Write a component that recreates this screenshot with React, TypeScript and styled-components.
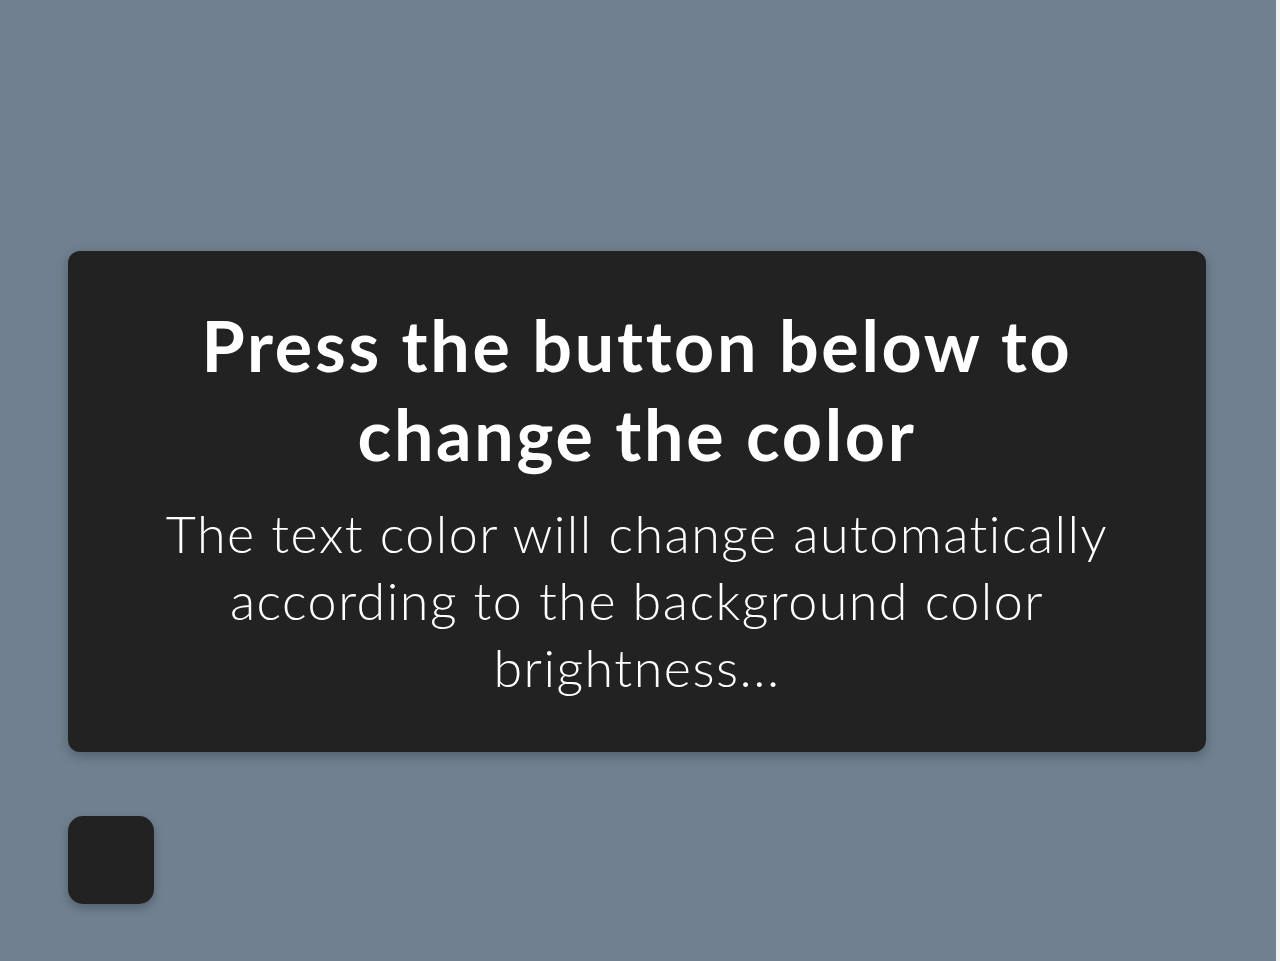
import styled, { createGlobalStyle } from 'styled-components'

const GlobalStyle = createGlobalStyle`
  html {
    background: #f1f1f1;
  }
  body {
    margin: 0;
    font-family: Lato, "Open Sans", sans-serif;
    font-variant-ligatures: none;
  }
`

const Page = styled.main`
  box-sizing: border-box;
  width: calc(100vw - 4px);
  min-height: 100vh;
  background: #708090;
  padding: 251px 70px 0 68px;
  display: flex;
  flex-direction: column;
  gap: 64px;
`

const Card = styled.section`
  box-sizing: border-box;
  height: 501px;
  background: #222222;
  border-radius: 12px;
  box-shadow: 0 4px 12px rgba(0, 0, 0, 0.25);
  padding: 50px 70px 0;
  text-align: center;
  color: #ffffff;
`

const Title = styled.h1`
  margin: 0 20px;
  font-size: 70px;
  font-weight: 700;
  line-height: 89px;
  letter-spacing: 2.7px;
`

const Description = styled.p`
  margin: 21px 0 0;
  font-size: 52px;
  font-weight: 300;
  line-height: 67px;
  letter-spacing: 1.5px;
`

const ColorButton = styled.button`
  width: 86px;
  height: 88px;
  border: none;
  border-radius: 15px;
  background: #222222;
  box-shadow: 0 4px 10px rgba(0, 0, 0, 0.25);
  cursor: pointer;
`

export default function App() {
  return (
    <>
      <GlobalStyle />
      <Page>
        <Card>
          <Title>Press the button below to change the color</Title>
          <Description>
            The text color will change automatically according to the background color brightness...
          </Description>
        </Card>
        <ColorButton aria-label="Change color" />
      </Page>
    </>
  )
}
